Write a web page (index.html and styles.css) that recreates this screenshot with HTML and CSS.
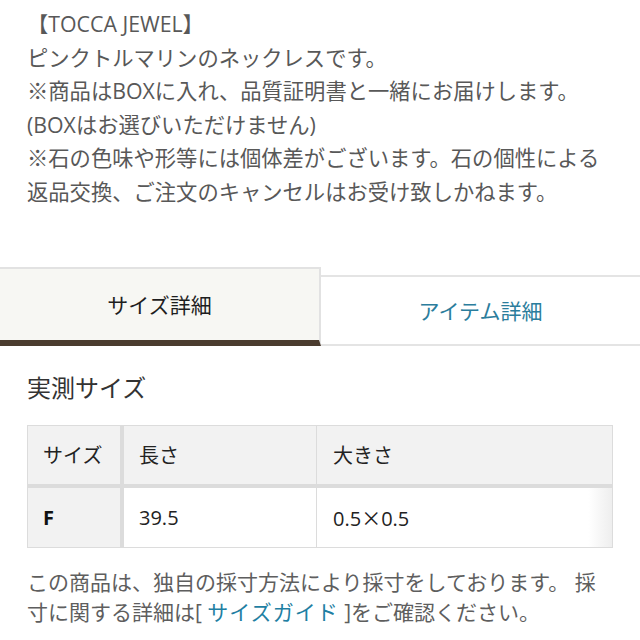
FILE: index.html
```html
<!DOCTYPE html>
<html lang="ja">
<head>
<meta charset="utf-8">
<link rel="stylesheet" href="styles.css">
</head>
<body>
<div class="desc">
【TOCCA JEWEL】<br>
ピンクトルマリンのネックレスです。<br>
※商品はBOXに入れ、品質証明書と一緒にお届けします。<br>
(BOXはお選びいただけません)<br>
※石の色味や形等には個体差がございます。石の個性による<br>
返品交換、ご注文のキャンセルはお受け致しかねます。
</div>

<div class="tabs">
  <div class="tab tab-active">サイズ詳細</div>
  <div class="tab tab-other">アイテム詳細</div>
</div>

<div class="section">
  <h2 class="section-title">実測サイズ</h2>
  <table class="size-table">
    <thead>
      <tr>
        <th class="c1">サイズ</th>
        <th class="c2">長さ</th>
        <th class="c3">大きさ</th>
      </tr>
    </thead>
    <tbody>
      <tr>
        <th class="c1 size-name">F</th>
        <td class="c2">39.5</td>
        <td class="c3 last">0.5<span class="times">×</span>0.5</td>
      </tr>
    </tbody>
  </table>
  <p class="note">この商品は、独自の採寸方法により採寸をしております。 採<br>寸に関する詳細は[ <span class="link">サイズガイド</span> ]をご確認ください。</p>
</div>
</body>
</html>
```

FILE: styles.css
```css
html, body {
  margin: 0;
  padding: 0;
  background: #ffffff;
}

body {
  font-family: "Open Sans", "Noto Sans CJK JP", sans-serif;
  color: #555555;
  width: 640px;
  overflow: hidden;
}

.desc {
  padding: 7px 27px 0;
  font-size: 21.3px;
  line-height: 33.6px;
  color: #585858;
}

.tabs {
  margin-top: 58px;
  display: flex;
  align-items: flex-end;
}

.tab {
  flex: 1;
  display: flex;
  align-items: center;
  justify-content: center;
  font-size: 21px;
  box-sizing: border-box;
}

.tab-active {
  height: 79px;
  background: #f7f7f3;
  border-top: 2px solid #e2e2e2;
  border-right: 2px solid #e2e2e2;
  border-bottom: 6px solid #4b3c2f;
  color: #1e1e1e;
}

.tab-other {
  height: 71px;
  background: #ffffff;
  border-top: 2px solid #e4e4e4;
  border-bottom: 2px solid #e4e4e4;
  color: #2b7d9c;
}

.section {
  padding: 0 27px;
}

.section-title {
  margin: 24px 0 19px;
  font-size: 24px;
  line-height: 36px;
  font-weight: normal;
  color: #333333;
}

.size-table {
  width: 586px;
  border-collapse: separate;
  border-spacing: 0;
  border: 1px solid #dcdcdc;
  font-size: 20px;
  color: #222222;
  table-layout: fixed;
}

.size-table th,
.size-table td {
  padding: 0 15px;
  text-align: left;
  font-weight: normal;
  box-sizing: border-box;
}

.size-table thead th {
  height: 62px;
  background: #f2f2f2;
  border-bottom: 4px solid #dcdcdc;
}

.size-table tbody th,
.size-table tbody td {
  height: 59px;
}

.size-table .c1 {
  width: 96px;
  border-right: 4px solid #dcdcdc;
  background: #f2f2f2;
}

.size-table .c2 {
  width: 193px;
  border-right: 1px solid #dcdcdc;
}

.size-table .c3 {
  padding-left: 16px;
}

.size-table .size-name {
  font-weight: bold;
  color: #111111;
}

.size-table .last {
  background: linear-gradient(to right, #ffffff 0%, #ffffff 92%, #eeeeee 100%);
}

.times {
  font-family: "Noto Sans CJK JP", sans-serif;
}

.note {
  margin: 19px 0 0;
  font-size: 21px;
  line-height: 30px;
  color: #5e5e5e;
}

.link {
  color: #1f7fa3;
  letter-spacing: 1px;
}
```
